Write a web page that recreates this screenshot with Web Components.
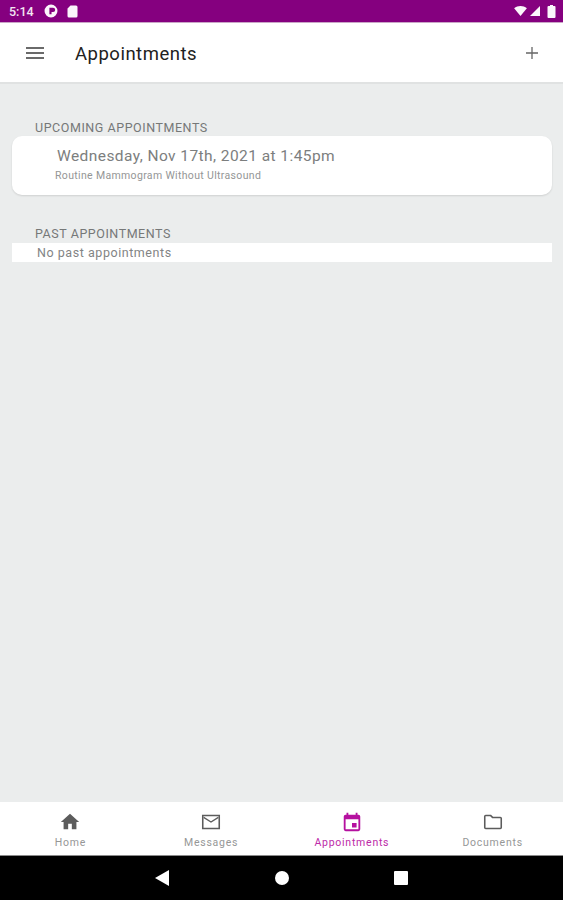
<!DOCTYPE html>
<html>
<head>
<meta charset="utf-8">
<title>Appointments</title>
<style>
  html, body { margin: 0; height: 100%; }
  body { font-family: Roboto, "Liberation Sans", sans-serif; background: #ebeded; }
  x-app { height: 900px; }
</style>
</head>
<body>
<x-app>
  <x-status-bar slot="status"></x-status-bar>
  <x-app-header slot="header" title="Appointments"></x-app-header>
  <x-section title="UPCOMING APPOINTMENTS" gap="0">
    <x-appointment-card when="Wednesday, Nov 17th, 2021 at 1:45pm" what="Routine Mammogram Without Ultrasound"></x-appointment-card>
  </x-section>
  <x-section title="PAST APPOINTMENTS" gap="1">
    <x-empty-row>No past appointments</x-empty-row>
  </x-section>
  <x-tab-bar slot="tabs"></x-tab-bar>
  <x-nav-bar slot="nav"></x-nav-bar>
</x-app>

<script>
class AppElement extends HTMLElement {
  constructor() {
    super();
    this.attachShadow({ mode: 'open' }).innerHTML = `
      <style>
        :host { display: flex; flex-direction: column; }
        main { flex: 1; padding-top: 36px; display: flex; flex-direction: column; gap: 31px; }
      </style>
      <slot name="status"></slot>
      <slot name="header"></slot>
      <main><slot></slot></main>
      <slot name="tabs"></slot>
      <slot name="nav"></slot>
    `;
  }
}

class StatusBarElement extends HTMLElement {
  constructor() {
    super();
    this.attachShadow({ mode: 'open' }).innerHTML = `
      <style>
        :host { display: flex; align-items: center; height: 22px; padding: 0 7px 0 9px; background: #85007f; color: #f3e6f2; font: 500 12.5px Roboto, sans-serif; box-sizing: content-box; border-bottom: 1px solid #c9a6c7; }
        .time { width: 35px; }
        svg { display: block; fill: #fbf5fb; }
        .left { display: flex; align-items: center; }
        .right { margin-left: auto; display: flex; align-items: center; gap: 3px; }
      </style>
      <div class="left">
        <span class="time">5:14</span>
        <svg width="14" height="14" viewBox="0 0 13 13" style="margin:0 9px 0 0"><path fill-rule="evenodd" d="M6.5 .5a6 6 0 1 0 0 12 6 6 0 0 0 0-12zM5 3.500h3.400a2 2 0 0 1 0 4H7v2H5z"/></svg>
        <svg width="11" height="13" viewBox="0 0 11 13"><path d="M3.500 .5H9a1.500 1.500 0 0 1 1.500 1.500v9A1.500 1.500 0 0 1 9 12.500H2A1.500 1.500 0 0 1 .5 11V3.500z"/></svg>
      </div>
      <div class="right">
        <svg width="13" height="10" viewBox="0 0 14 11"><path d="M0 2.500C4-.8 10-.8 14 2.500L7 11z"/></svg>
        <svg width="10" height="10" viewBox="0 0 11 11"><path d="M11 0v11H0z"/></svg>
        <svg width="9" height="13" viewBox="0 0 9 13" style="margin-left:4px"><path d="M3 0h3v1h1.500A1 1 0 0 1 8.500 2v10a1 1 0 0 1-1 1h-6a1 1 0 0 1-1-1V2a1 1 0 0 1 1-1H3z"/></svg>
      </div>
    `;
  }
}

class AppHeaderElement extends HTMLElement {
  constructor() {
    super();
    this.attachShadow({ mode: 'open' }).innerHTML = `
      <style>
        :host { display: flex; align-items: center; height: 59px; background: #fff; border-bottom: 2px solid #e0e2e2; }
        .menu { margin-left: 26px; width: 18px; height: 12px; display: flex; flex-direction: column; justify-content: space-between; }
        .menu i { height: 2px; background: #6a6a6a; }
        h1 { margin: 2px 0 0 31px; font: 400 18.5px Roboto, sans-serif; color: #212121; letter-spacing: .5px; }
        svg { margin-left: auto; margin-right: 24px; display: block; }
      </style>
      <div class="menu"><i></i><i></i><i></i></div>
      <h1></h1>
      <svg width="14" height="14" viewBox="0 0 14 14"><path d="M7 1v12M1 7h12" stroke="#666" stroke-width="1.300"/></svg>
    `;
    this.shadowRoot.querySelector('h1').textContent = this.getAttribute('title');
  }
}

class SectionElement extends HTMLElement {
  constructor() {
    super();
    this.attachShadow({ mode: 'open' }).innerHTML = `
      <style>
        :host { display: flex; flex-direction: column; }
        h2 { margin: 0 0 0 35px; font: 400 12.5px/16px Roboto, sans-serif; color: #767878; letter-spacing: .55px; }
        .body { margin: 0 11px 0 12px; }
      </style>
      <h2></h2>
      <div class="body"><slot></slot></div>
    `;
    this.shadowRoot.querySelector('h2').textContent = this.getAttribute('title');
    this.shadowRoot.querySelector('.body').style.marginTop = this.getAttribute('gap') + 'px';
  }
}

class AppointmentCardElement extends HTMLElement {
  constructor() {
    super();
    this.attachShadow({ mode: 'open' }).innerHTML = `
      <style>
        :host { display: flex; flex-direction: column; height: 59px; box-sizing: border-box; padding: 10px 0 0 43px; background: #fff; border-radius: 10px; box-shadow: 0 1px 2px rgba(0,0,0,.12); }
        .when { margin-left: 2px; font: 400 15.5px/20px Roboto, sans-serif; color: #7c7e7e; letter-spacing: .43px; }
        .what { margin-top: 3px; font: 400 10.5px/14px Roboto, sans-serif; color: #949696; letter-spacing: .34px; }
      </style>
      <div class="when"></div>
      <div class="what"></div>
    `;
    this.shadowRoot.querySelector('.when').textContent = this.getAttribute('when');
    this.shadowRoot.querySelector('.what').textContent = this.getAttribute('what');
  }
}

class EmptyRowElement extends HTMLElement {
  constructor() {
    super();
    this.attachShadow({ mode: 'open' }).innerHTML = `
      <style>
        :host { display: block; height: 19px; padding-left: 25px; background: #fff; font: 400 12.5px/19px Roboto, sans-serif; color: #828484; letter-spacing: .55px; }
      </style>
      <slot></slot>
    `;
  }
}

class TabBarElement extends HTMLElement {
  constructor() {
    super();
    const tabs = [
      ['Home', '<path fill="currentColor" d="M10 20v-6h4v6h5v-8h3L12 3 2 12h3v8z"/>', false],
      ['Messages', '<path fill="none" stroke="currentColor" stroke-width="1.700" d="M3 5h18v14H3z"/><path fill="none" stroke="currentColor" stroke-width="1.400" d="M4 7l8 5 8-5"/>', false],
      ['Appointments', '<path fill="currentColor" d="M17 13h-5v5h5zM16 2v2H8V2H6v2H5a2 2 0 0 0-2 2v14a2 2 0 0 0 2 2h14a2 2 0 0 0 2-2V6a2 2 0 0 0-2-2h-1V2zm3 18H5V9h14z"/>', true],
      ['Documents', '<path fill="none" stroke="currentColor" stroke-width="1.700" d="M3 6a1 1 0 0 1 1-1h5.500l2 2H20a1 1 0 0 1 1 1v10a1 1 0 0 1-1 1H4a1 1 0 0 1-1-1z"/>', false],
    ];
    this.attachShadow({ mode: 'open' }).innerHTML = `
      <style>
        :host { display: grid; grid-template-columns: repeat(4, 1fr); height: 52px; padding-bottom: 1px; background: #fff; border-bottom: 1px solid #8a8a8a; box-sizing: content-box; }
        .tab { display: flex; flex-direction: column; align-items: center; padding-top: 9px; color: #5c5c5c; }
        .tab span { margin-top: 3px; font: 400 10.5px/13px Roboto, sans-serif; color: #969797; letter-spacing: .75px; }
        .tab.on { color: #b5119f; }
        .tab.on span { color: #bd2aa8; }
        svg { display: block; }
      </style>
      ${tabs.map(([label, icon, on]) => `
        <div class="tab${on ? ' on' : ''}">
          <svg width="22" height="22" viewBox="0 0 24 24">${icon}</svg>
          <span>${label}</span>
        </div>`).join('')}
    `;
  }
}

class NavBarElement extends HTMLElement {
  constructor() {
    super();
    this.attachShadow({ mode: 'open' }).innerHTML = `
      <style>
        :host { display: flex; justify-content: center; align-items: center; gap: 105px; height: 44px; background: #000; }
        svg { display: block; fill: #fff; }
        .back { margin-right: 1px; }
      </style>
      <svg class="back" width="14" height="16" viewBox="0 0 14 16"><path d="M14 0v16L0 8z"/></svg>
      <svg width="14" height="14" viewBox="0 0 14 14"><circle cx="7" cy="7" r="7"/></svg>
      <svg width="14" height="14" viewBox="0 0 14 14"><rect width="14" height="14" rx="1"/></svg>
    `;
  }
}

customElements.define('x-app', AppElement);
customElements.define('x-status-bar', StatusBarElement);
customElements.define('x-app-header', AppHeaderElement);
customElements.define('x-section', SectionElement);
customElements.define('x-appointment-card', AppointmentCardElement);
customElements.define('x-empty-row', EmptyRowElement);
customElements.define('x-tab-bar', TabBarElement);
customElements.define('x-nav-bar', NavBarElement);
</script>
</body>
</html>
